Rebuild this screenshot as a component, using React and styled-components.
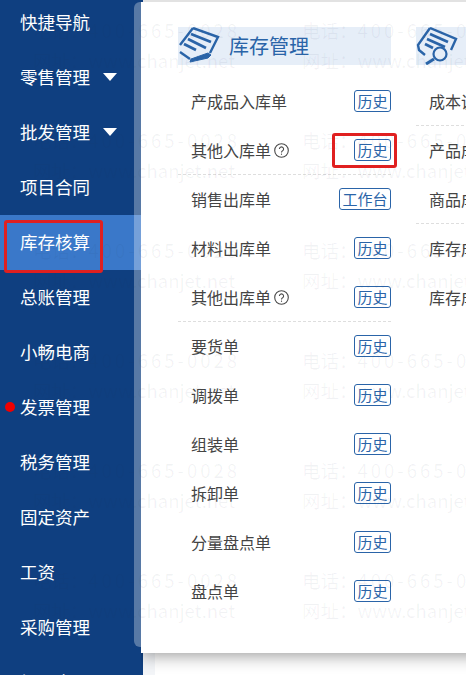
import React from 'react';
import styled, { createGlobalStyle } from 'styled-components';

const GlobalStyle = createGlobalStyle`
  html, body {
    margin: 0;
    padding: 0;
    background: #fff;
  }
  body {
    font-family: "Noto Sans CJK SC", "Noto Sans", sans-serif;
  }
`;

const Page = styled.div`
  position: relative;
  display: flex;
  width: 466px;
  height: 675px;
  overflow: hidden;
  background: #fff;
`;

const Sidebar = styled.nav`
  position: relative;
  flex: 0 0 143px;
  height: 675px;
  overflow: hidden;
  background: #0f3f80;
`;

const MenuList = styled.div`
  margin-top: -5px;
`;

const MenuItem = styled.div`
  position: relative;
  display: flex;
  align-items: center;
  gap: 13px;
  box-sizing: border-box;
  height: 55px;
  padding: 0 0 2px 20px;
  color: #fff;
  font-size: 17.5px;
  background: ${({ $active }) => ($active ? '#3a78c9' : 'transparent')};
`;

const Arrow = styled.span`
  width: 0;
  height: 0;
  border-left: 7px solid transparent;
  border-right: 7px solid transparent;
  border-top: 8px solid #fff;
`;

const Dot = styled.span`
  position: absolute;
  left: 5px;
  top: 22px;
  width: 10px;
  height: 10px;
  border-radius: 50%;
  background: #f00000;
`;

const Scrollbar = styled.div`
  position: absolute;
  left: 134px;
  top: 2px;
  width: 7px;
  height: 645px;
  border-radius: 6px 0 0 6px;
  background: rgba(255, 255, 255, 0.3);
`;

const Content = styled.div`
  flex: 1;
  box-sizing: border-box;
  border-top: 2px solid #e2e2e2;
  background: linear-gradient(to right, #f3f5f8 12px, #fff 12px);
`;

const Panel = styled.div`
  position: relative;
  display: flex;
  gap: 25px;
  height: 651px;
  margin-left: -2px;
  padding-left: 37px;
  overflow: hidden;
  background: #fff;
  box-shadow: 0 2px 16px rgba(0, 0, 0, 0.42);
  clip-path: inset(0 0 -30px 0);
`;

const Column = styled.section`
  flex: 0 0 213px;
`;

const ColumnHead = styled.div`
  display: flex;
  align-items: flex-start;
  gap: 9px;
  height: 38px;
  margin-top: 25px;
  margin-bottom: 12px;
  color: #2a64a8;
  font-size: 20px;
  line-height: 38px;
  background: #e6eef8;
`;

const Row = styled.div`
  display: flex;
  align-items: center;
  justify-content: space-between;
  box-sizing: border-box;
  height: 49px;
  padding-left: 13px;
  color: #444;
  font-size: 16px;
  white-space: nowrap;
  border-bottom: 1px ${({ $divider }) => ($divider ? 'dashed #dedede' : 'solid transparent')};
`;

const RowLabel = styled.span`
  display: flex;
  align-items: center;
  gap: 3px;
`;

const HelpGlyph = styled.svg`
  flex: none;
  width: 15px;
  height: 15px;
  fill: none;
  stroke: #4a4a4a;
  stroke-width: 1.1;
`;

const HeadGlyph = styled.svg`
  flex: none;
  width: 42px;
  height: 38px;
  fill: none;
  stroke: #2a64a8;
`;

const Tag = styled.span`
  box-sizing: border-box;
  height: 22px;
  padding: 0 2.5px;
  border: 1px solid #2a64a8;
  border-radius: 3px;
  color: #2a64a8;
  font-size: 15px;
  line-height: 19px;
  background: #fff;
`;

const Highlight = styled.div`
  position: absolute;
  box-sizing: border-box;
  left: ${({ $left }) => $left}px;
  top: ${({ $top }) => $top}px;
  width: ${({ $width }) => $width}px;
  height: ${({ $height }) => $height}px;
  border: 3px solid #e02020;
  border-radius: 3px;
  pointer-events: none;
`;

const Watermark = styled.div`
  position: absolute;
  left: 33px;
  top: 15px;
  display: grid;
  grid-template-columns: repeat(2, 269px);
  grid-auto-rows: 110px;
  pointer-events: none;
`;

const WatermarkCell = styled.div`
  color: rgba(40, 60, 90, 0.06);
  font-size: 18.5px;
  line-height: 30px;
  white-space: nowrap;
`;

const Phone = styled.span`
  letter-spacing: 3px;
`;

const menu = [
  { name: '快捷导航' },
  { name: '零售管理', arrow: true },
  { name: '批发管理', arrow: true },
  { name: '项目合同' },
  { name: '库存核算', active: true },
  { name: '总账管理' },
  { name: '小畅电商' },
  { name: '发票管理', dot: true },
  { name: '税务管理' },
  { name: '固定资产' },
  { name: '工资' },
  { name: '采购管理' },
  { name: '加盟商' },
];

const stock = [
  { name: '产成品入库单', tag: '历史' },
  { name: '其他入库单', tag: '历史', help: true, divider: true },
  { name: '销售出库单', tag: '工作台' },
  { name: '材料出库单', tag: '历史' },
  { name: '其他出库单', tag: '历史', help: true, divider: true },
  { name: '要货单', tag: '历史' },
  { name: '调拨单', tag: '历史' },
  { name: '组装单', tag: '历史' },
  { name: '拆卸单', tag: '历史' },
  { name: '分量盘点单', tag: '历史' },
  { name: '盘点单', tag: '历史' },
];

const cost = [
  { name: '成本调整单', divider: true },
  { name: '产品成本计算' },
  { name: '商品成本核算', divider: true },
  { name: '库存成本表' },
  { name: '库存成本明细' },
];

const HelpIcon = () => (
  <HelpGlyph viewBox="0 0 15 15">
    <circle cx="7.5" cy="7.5" r="6.8" />
    <path d="M5.4 6a2.1 2.1 0 1 1 3.2 1.8c-.7.4-1.1.8-1.1 1.6" />
    <path d="M7.5 10.6v1.2" />
  </HelpGlyph>
);

const NoteIcon = () => (
  <HeadGlyph viewBox="0 0 42 38">
    <path d="M15 1 L2 18 M15 1 L40 10 L32 26 M2 25 L12 32" strokeWidth="2.4" />
    <path d="M13 7 L33 15 M10 12 L28 21 M6 17 L18 23" strokeWidth="2.8" />
    <path d="M12 35 L13 32 L30 26 L33 28 L30 31 Z" fill="#2a64a8" strokeWidth="1" />
  </HeadGlyph>
);

const SearchNoteIcon = () => (
  <HeadGlyph viewBox="0 0 42 38">
    <path d="M14 1 L2 18 L3 23 L9 28 M14 1 L40 12 L35 23" strokeWidth="2.4" />
    <path d="M14 7 L32 15 M11 12 L29 20 M9 17 L17 21" strokeWidth="2.8" />
    <circle cx="24" cy="27" r="6.5" strokeWidth="2.2" />
    <path d="M18 32 L10 37" strokeWidth="3" />
  </HeadGlyph>
);

const ListRow = ({ item }) => (
  <Row $divider={item.divider}>
    <RowLabel>
      {item.name}
      {item.help && <HelpIcon />}
    </RowLabel>
    {item.tag && <Tag>{item.tag}</Tag>}
  </Row>
);

const App = () => (
  <Page>
    <GlobalStyle />
    <Sidebar>
      <MenuList>
        {menu.map((item) => (
          <MenuItem key={item.name} $active={item.active}>
            {item.dot && <Dot />}
            {item.name}
            {item.arrow && <Arrow />}
          </MenuItem>
        ))}
      </MenuList>
      <Scrollbar />
    </Sidebar>
    <Content>
      <Panel>
        <Column>
          <ColumnHead>
            <NoteIcon />
            库存管理
          </ColumnHead>
          {stock.map((item) => (
            <ListRow key={item.name} item={item} />
          ))}
        </Column>
        <Column>
          <ColumnHead>
            <SearchNoteIcon />
          </ColumnHead>
          {cost.map((item) => (
            <ListRow key={item.name} item={item} />
          ))}
        </Column>
      </Panel>
    </Content>
    <Watermark>
      {Array.from({ length: 12 }, (_, i) => (
        <WatermarkCell key={i}>
          电话：<Phone>400-665-0028</Phone>
          <br />
          网址：www.chanjet.net
        </WatermarkCell>
      ))}
    </Watermark>
    <Highlight $left={4} $top={220} $width={99} $height={53} />
    <Highlight $left={332} $top={133} $width={65} $height={35} />
  </Page>
);

export default App;
